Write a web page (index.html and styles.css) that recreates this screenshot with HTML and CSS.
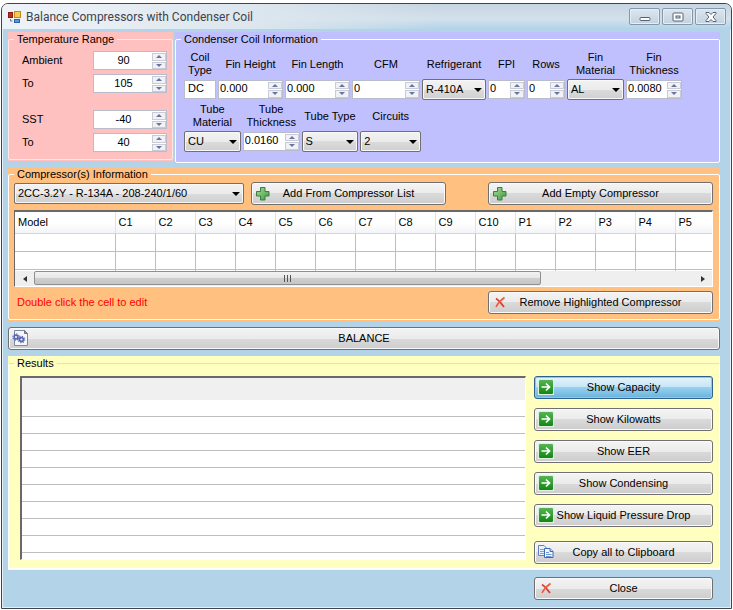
FILE: index.html
```html
<!DOCTYPE html>
<html lang="en">
<head>
<meta charset="utf-8">
<title>Balance Compressors with Condenser Coil</title>
<link rel="stylesheet" href="styles.css">
</head>
<body>
<svg class="defs" aria-hidden="true">
  <defs>
    <linearGradient id="g-plus" x1="0" y1="0" x2="1" y2="1"><stop offset="0" stop-color="#a5dd9c"/><stop offset="1" stop-color="#3f9a3c"/></linearGradient>
    <linearGradient id="g-go" x1="0" y1="0" x2="0" y2="1"><stop offset="0" stop-color="#55b455"/><stop offset="1" stop-color="#118811"/></linearGradient>
  </defs>
  <symbol id="i-plus" viewBox="0 0 16 16"><path d="M5.5 2.500h4.500v4h4v4.500h-4v4h-4.500v-4h-4v-4.500h4z" fill="url(#g-plus)" stroke="#3d7d3d"/></symbol>
  <symbol id="i-go" viewBox="0 0 16 16"><rect x="0.500" y="0.500" width="15" height="15" fill="#fff" stroke="#dff0df"/><rect x="1" y="1" width="14" height="14" rx="1" fill="url(#g-go)"/><path d="M3.500 8h8M8 4.500L11.500 8 8 11.500" fill="none" stroke="#fff" stroke-width="1.700"/></symbol>
  <symbol id="i-x" viewBox="0 0 16 16"><path d="M4 4.500c3 2 5 4.500 8 8.500" fill="none" stroke="#d8402c" stroke-width="1.800"/><path d="M12.500 3.500C9 6 6 9 4 13" fill="none" stroke="#ee5a44" stroke-width="1.600"/></symbol>
  <symbol id="i-copy" viewBox="0 0 16 16"><path d="M.5 1.500h5.500l2.500 2.500v7.500h-8z" fill="#e8f0fc" stroke="#5b82c8"/><path d="M2 5.500h4M2 7.500h4M2 9.500h4" stroke="#7ba0dc"/><path d="M6.500 4.500h5.500l3 3v6h-8.500z" fill="#f2f7ff" stroke="#3f68b4"/><path d="M12 4.500v3h3" fill="#c6d8f5" stroke="#3f68b4"/><path d="M8 8.500h3M8 10.500h5.500M8 12.500h5.500" stroke="#6d94d6"/></symbol>
  <symbol id="i-gears" viewBox="0 0 16 16"><path d="M2.500.5h10l3 3v12h-13z" fill="#f4f6fb" stroke="#8088a0"/><path d="M12.500.5v3h3z" fill="#8a94ac" stroke="#6b7488"/><circle cx="4" cy="7" r="1.900" fill="none" stroke="#5a66b4" stroke-width="1.600"/><circle cx="4" cy="7" r="3.200" fill="none" stroke="#5a66b4" stroke-width="1.200" stroke-dasharray="1.200 1.300"/><circle cx="9.500" cy="9.500" r="1.900" fill="none" stroke="#5a66b4" stroke-width="1.600"/><circle cx="9.500" cy="9.500" r="3.200" fill="none" stroke="#5a66b4" stroke-width="1.200" stroke-dasharray="1.200 1.300"/></symbol>
</svg>
<main class="window">
  <header class="titlebar">
    <svg class="app-icon" viewBox="0 0 14 14" aria-hidden="true"><rect x="0.500" y="2.500" width="4" height="5" fill="#c03018" stroke="#8a1c10"/><rect x="6.500" y="1.500" width="6" height="6" fill="#f8cc48" stroke="#c08a18"/><rect x="6.500" y="9.500" width="5" height="3" fill="#5c94e0" stroke="#2f5fae"/><path d="M2.500 9v2h2" fill="none" stroke="#777"/></svg>
    <h1>Balance Compressors with Condenser Coil</h1>
    <div class="caption">
      <button aria-label="Minimize"><svg viewBox="0 0 14 12"><rect x="2" y="6.500" width="10" height="3" rx="1" fill="#fff" stroke="#566270"/></svg></button>
      <button aria-label="Maximize"><svg viewBox="0 0 14 12"><rect x="2" y="2" width="10" height="8" rx="1" fill="#fff" stroke="#566270"/><rect x="5" y="5" width="4" height="2" fill="#dde6ee" stroke="#566270"/></svg></button>
      <button aria-label="Close window"><svg viewBox="0 0 14 12"><path d="M2 1.500h3l2 2 2-2h3v1L9 6l3 3.500v1H9l-2-2-2 2H2v-1L5 6 2 2.500z" fill="#fff" stroke="#566270"/></svg></button>
    </div>
  </header>

  <div class="client">
    <div class="top">
      <section class="group pink">
        <fieldset>
          <legend>Temperature Range</legend>
          <div class="temps">
            <label for="amb1">Ambient</label>
            <span class="spin"><input id="amb1" type="number" value="90"><span class="arrows"><button aria-label="Up"></button><button aria-label="Down"></button></span></span>
            <label for="amb2">To</label>
            <span class="spin"><input id="amb2" type="number" value="105"><span class="arrows"><button aria-label="Up"></button><button aria-label="Down"></button></span></span>
            <label for="sst1" class="second">SST</label>
            <span class="spin second"><input id="sst1" type="number" value="-40"><span class="arrows"><button aria-label="Up"></button><button aria-label="Down"></button></span></span>
            <label for="sst2">To</label>
            <span class="spin"><input id="sst2" type="number" value="40"><span class="arrows"><button aria-label="Up"></button><button aria-label="Down"></button></span></span>
          </div>
        </fieldset>
      </section>

      <section class="group violet">
        <fieldset>
          <legend>Condenser Coil Information</legend>
          <div class="coil">
            <div class="fields first">
              <div class="field"><label for="ct">Coil<br>Type</label><span class="spin"><input id="ct" type="text" value="DC"></span></div>
              <div class="field"><label for="fh">Fin Height</label><span class="spin"><input id="fh" type="number" value="0.000" step="0.001"><span class="arrows"><button aria-label="Up"></button><button aria-label="Down"></button></span></span></div>
              <div class="field"><label for="fl">Fin Length</label><span class="spin"><input id="fl" type="number" value="0.000" step="0.001"><span class="arrows"><button aria-label="Up"></button><button aria-label="Down"></button></span></span></div>
              <div class="field"><label for="cfm">CFM</label><span class="spin"><input id="cfm" type="number" value="0"><span class="arrows"><button aria-label="Up"></button><button aria-label="Down"></button></span></span></div>
              <div class="field"><label for="ref">Refrigerant</label><span class="combo"><select id="ref"><option>R-410A</option></select></span></div>
              <div class="field"><label for="fpi">FPI</label><span class="spin"><input id="fpi" type="number" value="0"><span class="arrows"><button aria-label="Up"></button><button aria-label="Down"></button></span></span></div>
              <div class="field"><label for="rows">Rows</label><span class="spin"><input id="rows" type="number" value="0"><span class="arrows"><button aria-label="Up"></button><button aria-label="Down"></button></span></span></div>
              <div class="field"><label for="fm">Fin<br>Material</label><span class="combo"><select id="fm"><option>AL</option></select></span></div>
              <div class="field"><label for="ft">Fin<br>Thickness</label><span class="spin"><input id="ft" type="number" value="0.0080" step="0.0001"><span class="arrows"><button aria-label="Up"></button><button aria-label="Down"></button></span></span></div>
            </div>
            <div class="fields rest">
              <div class="field"><label for="tm">Tube<br>Material</label><span class="combo"><select id="tm"><option>CU</option></select></span></div>
              <div class="field"><label for="tt">Tube<br>Thickness</label><span class="spin"><input id="tt" type="number" value="0.0160" step="0.0001"><span class="arrows"><button aria-label="Up"></button><button aria-label="Down"></button></span></span></div>
              <div class="field"><label for="ty">Tube Type</label><span class="combo"><select id="ty"><option>S</option></select></span></div>
              <div class="field"><label for="ci">Circuits</label><span class="combo"><select id="ci"><option>2</option></select></span></div>
            </div>
          </div>
        </fieldset>
      </section>
    </div>

    <section class="group orange">
      <fieldset>
        <legend>Compressor(s) Information</legend>
        <div class="comp">
          <div class="bar">
            <span class="combo wide"><select aria-label="Compressor"><option>2CC-3.2Y - R-134A - 208-240/1/60</option></select></span>
            <button class="btn add"><svg><use href="#i-plus"/></svg><span>Add From Compressor List</span></button>
            <button class="btn long"><svg><use href="#i-plus"/></svg><span>Add Empty Compressor</span></button>
          </div>
          <div class="list">
            <table class="models">
              <thead><tr><th class="model">Model</th><th>C1</th><th>C2</th><th>C3</th><th>C4</th><th>C5</th><th>C6</th><th>C7</th><th>C8</th><th>C9</th><th>C10</th><th>P1</th><th>P2</th><th>P3</th><th>P4</th><th>P5</th></tr></thead>
              <tbody>
                <tr><td></td><td></td><td></td><td></td><td></td><td></td><td></td><td></td><td></td><td></td><td></td><td></td><td></td><td></td><td></td><td></td></tr>
                <tr><td></td><td></td><td></td><td></td><td></td><td></td><td></td><td></td><td></td><td></td><td></td><td></td><td></td><td></td><td></td><td></td></tr>
                <tr class="stub"><td></td><td></td><td></td><td></td><td></td><td></td><td></td><td></td><td></td><td></td><td></td><td></td><td></td><td></td><td></td><td></td></tr>
              </tbody>
            </table>
            <div class="scroll">
              <button class="left" aria-label="Scroll left"></button>
              <div class="track"><div class="thumb"><i></i><i></i><i></i></div></div>
              <button class="right" aria-label="Scroll right"></button>
            </div>
          </div>
          <div class="foot">
            <p>Double click the cell to edit</p>
            <button class="btn long"><svg><use href="#i-x"/></svg><span>Remove Highlighted Compressor</span></button>
          </div>
        </div>
      </fieldset>
    </section>

    <button class="btn balance"><svg><use href="#i-gears"/></svg><span>BALANCE</span></button>

    <section class="group yellow">
      <fieldset>
        <legend>Results</legend>
        <div class="results">
          <table class="grid" aria-label="Results">
            <thead><tr><td></td></tr></thead>
            <tbody><tr><td></td></tr><tr><td></td></tr><tr><td></td></tr><tr><td></td></tr><tr><td></td></tr><tr><td></td></tr><tr><td></td></tr><tr><td></td></tr><tr><td></td></tr><tr class="stub"><td></td></tr></tbody>
          </table>
          <div class="actions">
            <button class="btn active"><svg><use href="#i-go"/></svg><span>Show Capacity</span></button>
            <button class="btn"><svg><use href="#i-go"/></svg><span>Show Kilowatts</span></button>
            <button class="btn"><svg><use href="#i-go"/></svg><span>Show EER</span></button>
            <button class="btn"><svg><use href="#i-go"/></svg><span>Show Condensing</span></button>
            <button class="btn"><svg><use href="#i-go"/></svg><span>Show Liquid Pressure Drop</span></button>
            <button class="btn copy"><svg><use href="#i-copy"/></svg><span>Copy all to Clipboard</span></button>
          </div>
        </div>
      </fieldset>
    </section>

    <div class="closing"><button class="btn close"><svg><use href="#i-x"/></svg><span>Close</span></button></div>
  </div>
</main>
</body>
</html>
```
FILE: styles.css
```css
* { box-sizing: border-box; }
body { margin: 0; padding: 3px 1px 0; background: #fff; font: 11px/13px "Liberation Sans", Arial, sans-serif; color: #000; }
button, input, select { font: inherit; color: inherit; margin: 0; padding: 0; }
.defs { position: absolute; width: 0; height: 0; }
h1, p { margin: 0; font-weight: normal; }

.window { border: 1px solid #3c4650; border-radius: 7px 7px 0 0; background: #b2d3e8; box-shadow: inset 0 0 0 1px #e4eff7; overflow: hidden; }
.titlebar { display: flex; align-items: center; height: 25px; padding: 0 5px 0 6px; background: linear-gradient(90deg, #eef3f8 0, #dce6ee 35%, rgba(220, 230, 238, 0) 60%), linear-gradient(#c6d5e2, #d3e1ec 60%, #b2d3e8); }
.app-icon { width: 14px; height: 14px; margin-right: 4px; }
.titlebar h1 { flex: 1; font: 12px/16px Roboto, "Noto Sans", sans-serif; color: #3c434c; }
.caption { display: flex; gap: 2px; }
.caption button { display: grid; place-items: center; width: 31px; height: 17px; border: 1px solid #8597a8; border-radius: 2px; background: linear-gradient(#dbe6ef, #c3d2df); box-shadow: inset 0 0 0 1px #e6eef5; }
.caption svg { width: 14px; height: 12px; }

.client { padding: 3px 11px 8px 6px; }
.top { display: grid; grid-template-columns: 165fr 545fr; gap: 2px; margin-bottom: 3px; align-items: start; }
.group { padding: 0 0 1px; }
.group fieldset { min-width: 0; margin: 0; padding: 0; border: 1px solid #fff; border-radius: 2px; }
.group legend { margin-left: 5px; padding: 0 3px; line-height: 15px; }
.pink { background: #ffc0c0; }
.violet { background: #c0c0ff; }
.orange { background: #ffc080; }
.yellow { background: #ffffc0; }
.pink fieldset { border-color: #ffe8e8; }
.yellow fieldset { border-color: #dde0d8 #fff #fff #fff; }

.temps { display: grid; grid-template-columns: 1fr 74px; row-gap: 4px; padding: 4px 5px 7px 13px; }
.temps label { padding-top: 3px; }
.temps .second { margin-top: 13px; }
.temps .spin { height: 19px; }
.temps input { text-align: center; padding: 0 0 2px; }

.spin { display: flex; width: 100%; height: 19px; border: 1px solid #b9bccb; background: #fff; }
.spin input { flex: 1; min-width: 0; width: 0; border: 0; padding: 0 0 1px 1px; background: none; outline: 0; appearance: textfield; }
.spin input::-webkit-inner-spin-button { appearance: none; display: none; }
.spin input[type="text"] { padding-left: 3px; }
.arrows { display: grid; width: 14px; grid-template-rows: 1fr 1fr; gap: 1px; padding: 1px 0 0; }
.arrows button { display: grid; place-items: center; min-height: 0; border: 1px solid #c9ccd6; background: #f1f1f6; }
.arrows button::before { content: ""; border: solid transparent; border-width: 0 3px 3px; border-bottom-color: #66769e; }
.arrows button:last-child::before { border-width: 3px 3px 0; border-top-color: #66769e; }

.coil { display: grid; gap: 3px; padding: 4px 37px 10px 8px; }
.fields { display: grid; column-gap: 2px; }
.first { grid-template-columns: 32fr 65fr 65fr 68fr 64fr 37fr 38fr 57fr 56fr; }
.rest { grid-template-columns: 57fr 57fr 57fr 61fr 260fr; }
.field { display: grid; grid-template-rows: 26px 22px; gap: 1px; align-items: center; justify-items: center; min-width: 0; }
.field label { text-align: center; white-space: nowrap; }

.combo { position: relative; display: block; width: 100%; }
.combo select { display: block; width: 100%; height: 21px; padding: 0 12px 0 3px; appearance: none; border: 1px solid #707070; border-radius: 2px; background: linear-gradient(#f2f2f2, #ebebeb 50%, #dcdcdc 50%, #cfcfcf); box-shadow: inset 0 0 0 1px #f8f8f8; }
.combo::after { content: ""; position: absolute; right: 4px; top: 9px; border: solid transparent; border-width: 4px 4px 0; border-top-color: #000; pointer-events: none; }

.btn { position: relative; display: flex; align-items: center; justify-content: center; height: 23px; width: 100%; border: 1px solid #707070; border-radius: 3px; background: linear-gradient(#f4f4f4, #ebebeb 50%, #dadada 50%, #cdcdcd); box-shadow: inset 0 0 0 1px #fafafa; }
.btn svg { position: absolute; left: 3px; top: 2px; width: 16px; height: 16px; }
.btn.active { border-color: #2c628b; background: linear-gradient(#e5f4fc, #c4e5f6 50%, #98d1ef 50%, #68b3db); box-shadow: inset 0 0 0 1px #8fc9e8; }

.comp { padding: 0 6px 5px 5px; }
.bar { display: grid; grid-template-columns: 230fr 195fr 260fr; column-gap: 7px; align-items: center; }
.bar .long { width: auto; margin-left: 35px; }
.list { margin-top: 5px; border: 1px solid #fff; border-top: 2px solid #696969; border-left-color: #696969; background: #fff; overflow: hidden; }
.models { width: calc(100% + 3px); border-collapse: collapse; table-layout: fixed; }
.models .model { width: 100px; }
.models th { height: 21px; padding: 0 0 0 3px; border-right: 1px solid #dfe2e8; border-bottom: 1px solid #d5d5d5; background: linear-gradient(#fff 50%, #f3f4f7); font-weight: normal; text-align: left; }
.models td { height: 18px; padding: 0; border-right: 1px solid #bebebe; border-bottom: 1px solid #bebebe; }
.models th:last-child, .models td:last-child { border-right: 0; }
.models .stub td { height: 2px; border-bottom: 0; }
.scroll { display: flex; height: 15px; background: #efefef; }
.scroll button { position: relative; display: grid; place-items: center; width: 19px; border: 0; background: none; }
.scroll button::before { content: ""; border: solid transparent; border-width: 3px 4px 3px 0; border-right-color: #333; }
.scroll .right::before { border-width: 3px 0 3px 4px; border-left-color: #333; }
.track { flex: 1; }
.thumb { display: flex; align-items: center; justify-content: center; gap: 1px; width: 77%; height: 14px; border: 1px solid #8f8f8f; border-radius: 2px; background: linear-gradient(#f3f3f3, #e6e6e6 50%, #cfcfcf 50%, #c5c5c5); }
.thumb i { width: 2px; height: 7px; border-left: 1px solid #555; }
.foot { display: flex; align-items: center; justify-content: space-between; margin-top: 4px; }
.foot p { padding-left: 3px; color: #f00; }
.foot .long { width: 225px; }

.balance { margin: 6px 0; }

.results { display: flex; align-items: flex-start; gap: 8px; padding: 5px 6px 4px 11px; }
.grid { flex: 1; border: solid #fff; border-width: 2px 1px 1px 2px; border-color: #696969 #fff #fff #696969; border-spacing: 0; background: #fff; }
.grid td { height: 17px; padding: 0; border-bottom: 1px solid #bebebe; }
.grid thead td { height: 22px; border: 0; background: #f0f0f0; }
.grid .stub td { height: 6px; border: 0; }
.actions { display: grid; gap: 9px; width: 179px; }
.copy { margin-top: 5px; }
.closing { display: flex; justify-content: flex-end; padding: 7px 7px 0 0; }
.close { width: 179px; }
```
